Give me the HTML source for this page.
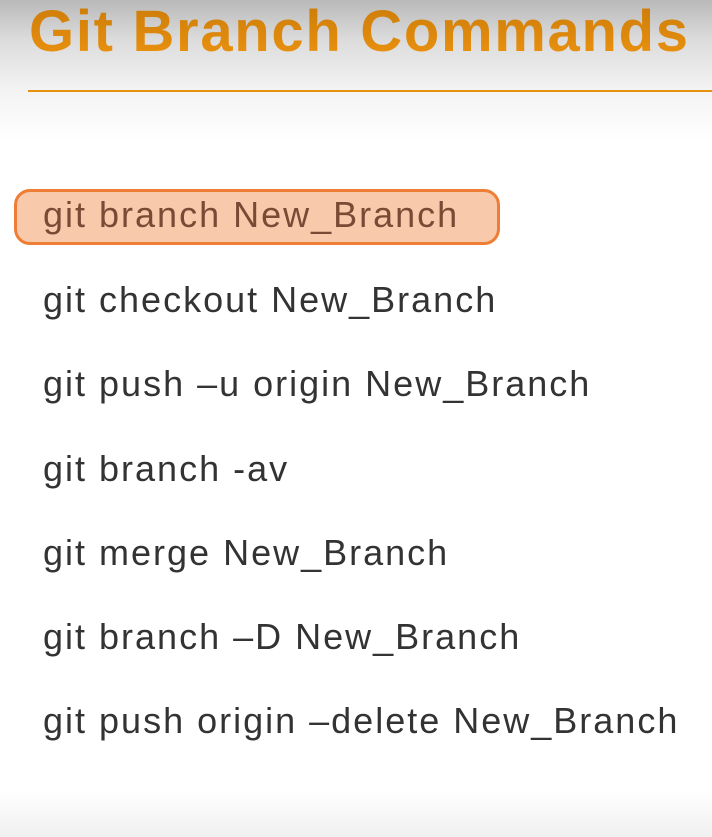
<!DOCTYPE html>
<html><head><meta charset="utf-8"><style>
html,body{margin:0;padding:0}
body{width:712px;height:837px;position:relative;overflow:hidden;
background:linear-gradient(to bottom,#b9b9b9 0px,#dcdcdc 40px,#f3f3f3 90px,#fff 140px,#fff 790px,#f0f0f0 837px);
font-family:"Liberation Sans",sans-serif}
.t{position:absolute;left:29px;top:-2px;font-size:58px;font-weight:bold;color:#e38b10;white-space:nowrap;letter-spacing:1.7px;
background:linear-gradient(#c97a08,#ee9410);-webkit-background-clip:text;background-clip:text;-webkit-text-fill-color:transparent}
.hr{position:absolute;left:28px;right:0;top:90px;height:2px;background:#e8900f}
.box{position:absolute;left:14px;top:189px;width:480px;height:50px;border:3px solid #ee7d35;border-radius:16px;background:#f8c9ab}
.l{position:absolute;left:43px;font-size:36px;color:#333;white-space:nowrap;letter-spacing:2px;line-height:40px}
</style></head><body>
<div class="t">Git Branch Commands</div>
<div class="hr"></div>
<div class="box"></div>
<div class="l" style="top:195px;color:#7a4a35">git branch New_Branch</div>
<div class="l" style="top:280px">git checkout New_Branch</div>
<div class="l" style="top:364px">git push –u origin New_Branch</div>
<div class="l" style="top:449px">git branch -av</div>
<div class="l" style="top:533px">git merge New_Branch</div>
<div class="l" style="top:617px">git branch –D New_Branch</div>
<div class="l" style="top:701px">git push origin –delete New_Branch</div>
</body></html>
